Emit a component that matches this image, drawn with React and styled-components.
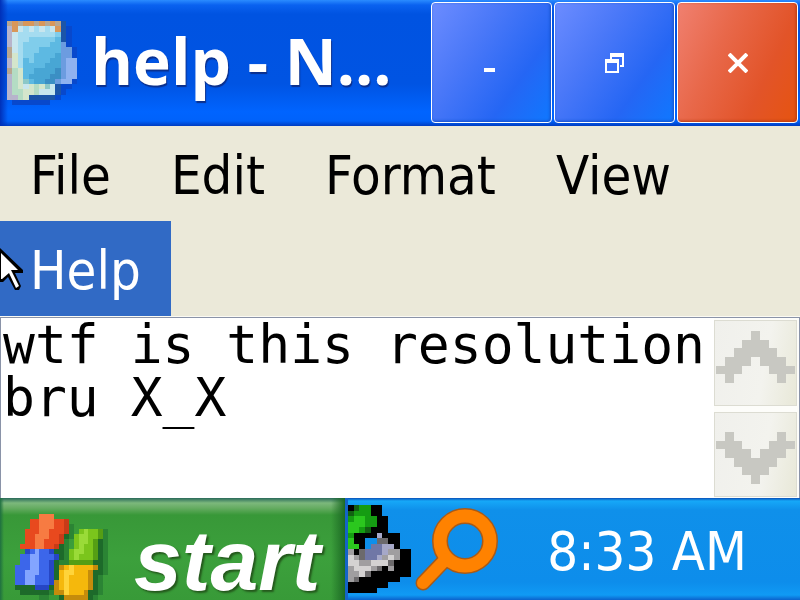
import React, { useState } from 'react'
import styled, { createGlobalStyle } from 'styled-components';

const GlobalStyle = createGlobalStyle`
    * {
        box-sizing: border-box;
    }
    body {
        margin: 0;
        background: #0b8bee;
    }
    button {
        border: 0;
        padding: 0;
        cursor: default;
    }
`;
const Screen = styled.div`
    display: flex;
    flex-direction: column;
    height: 100vh;
    min-height: 480px;
    overflow: hidden;
`;
const TitleBar = styled.header`
    display: flex;
    align-items: center;
    height: 126px;
    padding: 2px 2px 3px 7px;
    background: linear-gradient(90deg, #0030b8 0, rgba(0, 80, 224, 0) 8px),
        linear-gradient(#2b8cff 0, #0a62f0 5px, #0053e1 14px, #0054e3 84px, #0064ff 112px, #0062fa 121px, #003cc0 126px);
`;
const Title = styled.h1`
    flex: 1;
    min-width: 0;
    margin: 0 12px 0 14px;
    padding-bottom: 4px;
    overflow: hidden;
    white-space: nowrap;
    color: white;
    font: 700 64px/90px "Open Sans", "Noto Sans", sans-serif;
    text-shadow: 1px 2px 1px #0a2f8c;
`;
const CaptionButtons = styled.div`
    display: flex;
    align-self: stretch;
    gap: 2px;
`;
const CaptionButton = styled.button`
    display: flex;
    align-items: center;
    justify-content: center;
    width: 121px;
    border: 1px solid white;
    border-radius: 4px;
    background: ${({ $close }) => $close
        ? 'linear-gradient(115deg, #f08070 0, #e8684a 35%, #e25429 70%, #e65410 100%)'
        : 'linear-gradient(125deg, #6c8cff 0, #4a78f8 35%, #2566f4 70%, #0f78ff 100%)'};
    box-shadow: inset -1px -1px 3px ${({ $close }) => $close ? '#b83a10' : '#1550c8'};
`;
const MenuBar = styled.nav`
    position: relative;
    display: flex;
    flex-wrap: wrap;
    background: #ebe9d9;
    border-bottom: 1px solid #fbfaf3;
`;
const MenuItem = styled.button`
    height: 95px;
    padding: 4px 30px 0;
    background: ${({ $active }) => $active ? '#316ac5' : 'transparent'};
    color: ${({ $active }) => $active ? 'white' : 'black'};
    font: 54px/64px "DejaVu Sans Condensed", "Noto Sans", sans-serif;
`;
const Pointer = styled.svg`
    position: absolute;
    left: 0;
    bottom: 24px;
    pointer-events: none;
`;
const Editor = styled.main`
    display: flex;
    flex: 1;
    min-height: 0;
    border: 1px solid #8a93a8;
    border-bottom: 0;
    background: white;
`;
const TextBox = styled.textarea`
    flex: 1;
    min-width: 0;
    padding: 0 0 0 2px;
    border: 0;
    outline: 0;
    resize: none;
    overflow: hidden;
    background: white;
    color: black;
    font: 53px/53px "DejaVu Sans Mono", monospace;
`;
const ScrollBar = styled.div`
    display: flex;
    flex-direction: column;
    gap: 6px;
    width: 85px;
    padding: 2px 2px 1px 0;
    background: #fdfdfa;
`;
const ScrollButton = styled.button`
    display: flex;
    flex: 1;
    align-items: center;
    justify-content: center;
    padding: ${({ $down }) => $down ? '10px 0 2px' : '0 0 12px'};
    border: 1px solid #dcdcd2;
    background: linear-gradient(100deg, #f0f0ec 0, #f3f3ee 60%, #e8e8d8 100%);
`;
const TaskBar = styled.footer`
    display: flex;
    height: 102px;
    background: linear-gradient(#0a50b8 0, #16a8f8 3px, #0f90ea 12px, #0d8deb 84px, #109af4 97px, #0b62cc 102px);
`;
const StartButton = styled.button`
    display: flex;
    align-items: flex-start;
    gap: 26px;
    width: 348px;
    padding: 16px 0 0 10px;
    border-right: 3px solid #1464c8;
    background: linear-gradient(270deg, #1c6a24 0, rgba(50, 140, 50, 0) 14px),
        linear-gradient(90deg, #1f7040 0, rgba(56, 152, 56, 0) 4px),
        linear-gradient(#2a6a5a 0, #7cb87c 5px, #66ac62 10px, #389838 17px, #3ca03c 60px, #389a38 100%);
`;
const StartText = styled.span`
    padding-top: 10px;
    color: white;
    font: italic 700 86px/72px "Liberation Sans", sans-serif;
    text-shadow: 2px 2px 2px #24581c;
`;
const Tray = styled.div`
    display: flex;
    flex: 1;
    align-items: flex-start;
    padding-top: 7px;
`;
const TrayButton = styled.button`
    display: flex;
    background: none;
`;
const Clock = styled.time`
    margin: 15px 53px 0 auto;
    color: white;
    font: 54px/64px "DejaVu Sans Condensed", "Noto Sans", sans-serif;
`;

const notepadColors = {
    t: '#b9a68f', o: '#d8975a', p: '#b7b4cc', w: '#c8e6ee', l: '#a5dcf0', c: '#80cdeb',
    b: '#5db9e2', m: '#48a6d4', n: '#3b8fc4', v: '#6c9ce0', u: '#8fb2f0', g: '#b4dcc4',
    y: '#d4e6cc', e: '#8cc8c8', d: '#0848cc', k: '#1c55a8',
};
const notepadRows = [
    'totootototk..',
    'powlwlwlwokd.',
    'pwlllllllckd.',
    'pwllcccccbkd.',
    'pwlcccccbbvd.',
    'twlcccbbbbvvd',
    'tylccbbbbmvvd',
    'pylbcbbbmmvuu',
    'pylbbbbmmmvuu',
    'tgybbmmmmnvuu',
    'pgybmmmmnnvuu',
    'pgyebmmnnvuud',
    'pgywygyewkdd.',
    'pggyygwwwkd..',
    'ppgykkkkkd...',
    '.ddddddd.....',
];

const flagColors = {
    r: '#e8491e', R: '#f77b42', q: '#c83b18', b: '#3c66ea', B: '#83a5ff', c: '#2646c4',
    g: '#7bc51c', G: '#9adb38', h: '#559e14', y: '#f5b80c', Y: '#ffd43a', z: '#c58c0c',
    k: '#1d6a2a', d: '#2b8434',
};
const flagRows = [
    '......RRR...........',
    '....rrRRRrrq........',
    '....rrRRRrrqd.......',
    '...rrrRRrrrqd.gGgghd',
    '...rrRRRrrqkdgGGgghd',
    '...rrRRrrrqd.gGGghkd',
    '..rrrRRrrqkd.gGgghkd',
    '...cbBbbckkdgGGgghkd',
    '..bbBBbbbckdgGggghkd',
    '..bbBBbbckddhhhhhkkd',
    '.bbbBBbbckzyYyyyyzkd',
    '.bbBBBbbckyYYyyyzkkd',
    '.bbBBbbbckyYyyyyzkd.',
    '.bbBBbbbczyYyyyyzkd.',
    '.kkkkccckzyYyyyyzkd.',
    '..kkkkkkdzzYyyyzkkd.',
    '......dd..kzzzzzkd..',
];

const cartColors = {
    k: '#000000', d: '#126012', g: '#159c12', G: '#2bc71e', w: '#d4d2d2',
    s: '#a09ea0', a: '#6c6a6c', b: '#7077a6', L: '#a6a8c8',
};
const cartRows = [
    'kdggkk.....',
    'dgggkk.....',
    'gGGggkk....',
    'GGGggkk....',
    'GGgdkkk....',
    'gkkkkLkkk..',
    'Gkk..aakk..',
    'GGk.bbLLk..',
    'skabbbLsskk',
    'wsabbLswskk',
    'wwsswwwakkk',
    'swwwsakskkk',
    'sswakkkkkkk',
    'sakkkkkkk..',
    'kkkkkkk....',
    'kkkkk......',
];

const chevronUp = ['....x....', '...xxx...', '..xxxxx..', '.xxx.xxx.', 'xxx...xxx', '.x.....x.'];
const chevronDown = [...chevronUp].reverse();

// every letter in a row is one square, a dot is left empty
function PixelIcon({ rows, colors, width, height }) {
    const cols = rows[0].length;
    return (
        <svg width={width} height={height} viewBox={`0 0 ${cols} ${rows.length}`}
            preserveAspectRatio="none" shapeRendering="crispEdges" aria-hidden="true">
            {rows.map((row, y) => row.split('').map((cell, x) => (
                cell !== '.' && <rect key={`${x}-${y}`} x={x} y={y} width="1" height="1" fill={colors[cell]} />
            )))}
        </svg>
    )
}

function App() {
    const [text, setText] = useState('wtf is this resolution\nbru X_X');
    const menus = ['File', 'Edit', 'Format', 'View', 'Help'];

    return (
        <Screen>
            <GlobalStyle />
            <TitleBar>
                <PixelIcon rows={notepadRows} colors={notepadColors} width={70} height={84} />
                <Title>help - N...</Title>
                <CaptionButtons>
                    <CaptionButton aria-label="Minimize">
                        <svg width="24" height="24" viewBox="0 0 24 24">
                            <path d="M4 17h11v4H4z" fill="white" />
                        </svg>
                    </CaptionButton>
                    <CaptionButton aria-label="Restore">
                        <svg width="20" height="20" viewBox="0 0 20 20" fill="white" fillRule="evenodd" shapeRendering="crispEdges">
                            <path d="M0 6h14v14H0zM2 10v8h10v-8z" />
                            <path d="M5 0h14v14h-4v-2h2V4H7v2H5z" />
                        </svg>
                    </CaptionButton>
                    <CaptionButton $close aria-label="Close">
                        <svg width="20" height="20" viewBox="0 0 20 20">
                            <path d="M1 1L19 19M19 1L1 19" stroke="white" strokeWidth="4" />
                        </svg>
                    </CaptionButton>
                </CaptionButtons>
            </TitleBar>
            <MenuBar>
                {menus.map((menu) => (
                    <MenuItem key={menu} $active={menu === 'Help'}>{menu}</MenuItem>
                ))}
                <Pointer width="24" height="44" viewBox="0 0 24 44" aria-hidden="true">
                    <path d="M-3 0L0 0L23 22V25H15L21 38L19 42H15L8 29L3 34H-3Z" fill="black" />
                    <path d="M1 5L18 22H11L19 38L16 40L9 25L2 31H1Z" fill="white" />
                </Pointer>
            </MenuBar>
            <Editor>
                <TextBox aria-label="Document" spellCheck={false} value={text}
                    onChange={(evt) => setText(evt.target.value)} />
                <ScrollBar>
                    <ScrollButton aria-label="Scroll up">
                        <PixelIcon rows={chevronUp} colors={{ x: '#c8c8c2' }} width={79} height={52} />
                    </ScrollButton>
                    <ScrollButton $down aria-label="Scroll down">
                        <PixelIcon rows={chevronDown} colors={{ x: '#c8c8c2' }} width={79} height={52} />
                    </ScrollButton>
                </ScrollBar>
            </Editor>
            <TaskBar>
                <StartButton>
                    <PixelIcon rows={flagRows} colors={flagColors} width={98} height={86} />
                    <StartText>start</StartText>
                </StartButton>
                <Tray>
                    <TrayButton aria-label="Safely remove hardware">
                        <PixelIcon rows={cartRows} colors={cartColors} width={63} height={88} />
                    </TrayButton>
                    <TrayButton aria-label="Search">
                        <svg width="90" height="90" viewBox="411 505 90 90" fill="none" strokeLinecap="round">
                            <path d="M423 583L444 561" stroke="#a85a18" strokeWidth="15" />
                            <circle cx="465" cy="541" r="25" stroke="#a85a18" strokeWidth="16" />
                            <circle cx="465" cy="541" r="25" stroke="#ff8200" strokeWidth="13" />
                            <path d="M423 583L446 559" stroke="#ff8200" strokeWidth="12" />
                        </svg>
                    </TrayButton>
                    <Clock>8:33 AM</Clock>
                </Tray>
            </TaskBar>
        </Screen>
    )
}

export default App
